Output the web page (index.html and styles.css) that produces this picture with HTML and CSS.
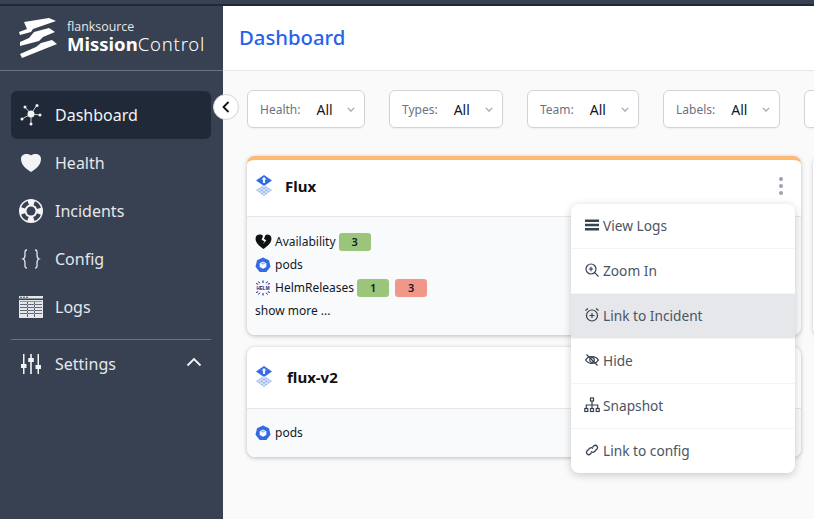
FILE: index.html
```html
<!DOCTYPE html>
<html lang="en">
<head>
  <meta charset="UTF-8" />
  <title>Mission Control</title>
  <link rel="stylesheet" href="styles.css">
</head>
<body>
  <div class="topstrip"></div>
  <div class="app">
    <aside class="sidebar">
      <div class="brand">
        <svg class="brand-logo" viewBox="0 0 38 41" width="38" height="41" fill="#fff">
          <path d="M5 4 30 0 37 3 14 11 12 14 1 17 0 14 8 11Z"/>
          <path d="M15 14 30 10 36 14 24 19 20 23 1 28 1 24 10 20Z"/>
          <path d="M22 25 33 22 38 26 3 40 1 36 17 29Z"/>
        </svg>
        <div class="brand-text">
          <div class="brand-small">flanksource</div>
          <div class="brand-big"><b>Mission</b><span>Control</span></div>
        </div>
      </div>
      <nav class="nav">
        <a class="nav-item active">
          <svg class="nav-icon" viewBox="0 0 24 24" width="24" height="24" fill="#f3f4f6" stroke="#f3f4f6">
            <path stroke-width=".8" d="M12 11 6 4M12 11 18 2M12 11 3 16M12 11 21 12M12 11 12 21"/>
            <circle cx="12" cy="11" r="3.500" stroke="none"/>
            <circle cx="6" cy="4" r="1.500" stroke="none"/><circle cx="18" cy="2.500" r="1.500" stroke="none"/>
            <circle cx="3" cy="16" r="1.500" stroke="none"/><circle cx="21" cy="12" r="1.500" stroke="none"/>
            <circle cx="12" cy="21" r="1.500" stroke="none"/>
          </svg>
          <span>Dashboard</span>
        </a>
        <a class="nav-item">
          <svg class="nav-icon" viewBox="0 0 24 24" width="24" height="24" fill="#f3f4f6">
            <path d="M12 21 C8 18.500 2 14.500 2 8 C2 4.500 4.500 3 7.500 3 C9.500 3 11 3.500 12 4.500 C13 3.500 14.500 3 16.500 3 C19.500 3 22 4.500 22 8 C22 14.500 16 18.500 12 21 Z"/>
          </svg>
          <span>Health</span>
        </a>
        <a class="nav-item">
          <svg class="nav-icon" viewBox="0 0 24 24" width="24" height="24">
            <circle cx="12" cy="12" r="12" fill="#f3f4f6"/>
            <circle cx="12" cy="12" r="4.500" fill="#374151"/>
            <circle cx="12" cy="12" r="8.500" fill="none" stroke="#374151" stroke-width="4" stroke-dasharray="7.350 6" stroke-dashoffset="-3"/>
          </svg>
          <span>Incidents</span>
        </a>
        <a class="nav-item">
          <svg class="nav-icon" viewBox="0 0 24 24" width="24" height="24" fill="none" stroke="#e5e7eb" stroke-width="1.300">
            <path d="M8 3 C5.500 3 6 5 6 8 C6 10.500 5.500 11.500 4 12 C5.500 12.500 6 13.500 6 16 C6 19 5.500 21 8 21"/>
            <path d="M16 3 C18.500 3 18 5 18 8 C18 10.500 18.500 11.500 20 12 C18.500 12.500 18 13.500 18 16 C18 19 18.500 21 16 21"/>
          </svg>
          <span>Config</span>
        </a>
        <a class="nav-item">
          <svg class="nav-icon" viewBox="0 0 24 24" width="24" height="24" fill="#e5e7eb">
            <path d="M0 1H24V3.500H0ZM0 5H24V23H0Z"/>
            <path fill="#374151" d="M1 1.700H3V2.700H1ZM4 1.700H6V2.700H4ZM7 1.700H9V2.700H7ZM1 9H23V9.800H1ZM1 12H23V12.800H1ZM1 15H23V15.800H1ZM1 18H23V18.800H1ZM8 7V22H8.800V7ZM15 7V22H15.800V7ZM1 6.500H23V7H1Z"/>
          </svg>
          <span>Logs</span>
        </a>
        <div class="nav-divider"></div>
        <a class="nav-item settings">
          <svg class="nav-icon" viewBox="0 0 24 24" width="24" height="24" fill="#f3f4f6">
            <path d="M4 2H5.500V12H7.500V16H5.500V22H4V16H2V12H4ZM11.200 2H12.800V6H14.800V10H12.800V22H11.200V10H9.200V6H11.200ZM18.500 2H20V13H22V17H20V22H18.500V17H16.500V13H18.500Z"/>
          </svg>
          <span>Settings</span>
          <svg class="nav-chevron" viewBox="0 0 16 10" width="16" height="10" fill="none" stroke="#f3f4f6" stroke-width="1.800">
            <path d="M1.500 8.500 8 2 14.500 8.500"/>
          </svg>
        </a>
      </nav>
    </aside>
    <button class="collapse">
      <svg viewBox="0 0 10 14" width="10" height="14" fill="none" stroke="#111" stroke-width="1.800"><path d="M7.500 2 2.500 7 7.500 12"/></svg>
    </button>
    <div class="content">
      <header class="header"><h1>Dashboard</h1></header>
      <main class="main">
        <div class="filters">
          <div class="filter filter-health"><span class="filter-label">Health:</span><span class="filter-value">All</span><svg class="caret" viewBox="0 0 10 6" width="8" height="5"><path d="M1 1 5 5 9 1" fill="none" stroke="#9ca3af" stroke-width="1.600"/></svg></div>
          <div class="filter filter-types"><span class="filter-label">Types:</span><span class="filter-value">All</span><svg class="caret" viewBox="0 0 10 6" width="8" height="5"><path d="M1 1 5 5 9 1" fill="none" stroke="#9ca3af" stroke-width="1.600"/></svg></div>
          <div class="filter filter-team"><span class="filter-label">Team:</span><span class="filter-value">All</span><svg class="caret" viewBox="0 0 10 6" width="8" height="5"><path d="M1 1 5 5 9 1" fill="none" stroke="#9ca3af" stroke-width="1.600"/></svg></div>
          <div class="filter filter-labels"><span class="filter-label">Labels:</span><span class="filter-value">All</span><svg class="caret" viewBox="0 0 10 6" width="8" height="5"><path d="M1 1 5 5 9 1" fill="none" stroke="#9ca3af" stroke-width="1.600"/></svg></div>
          <div class="filter filter-more"></div>
        </div>

        <div class="grid">
          <div class="card card-warn">
            <div class="card-head">
              <svg class="flux-icon" viewBox="0 0 18 22" width="18" height="22">
                <path fill="#326ce5" d="M9 0 17 5.500 9 11 1 5.500Z"/>
                <path fill="#fff" d="M8 3H10V8H8Z"/><path fill="#fff" d="M6.500 4.500 9 2 11.500 4.500Z"/>
                <path fill="#9db8ef" d="M9 10 17 15 9 21 1 15Z"/>
                <path stroke="#fff" stroke-width=".6" d="M4 12 13 18M7 10.500 15 16M2.500 14 11 20M14 12 5 18M11 10.500 3 16M15.500 14 7 20"/>
              </svg>
              <span class="card-title">Flux</span>
              <svg class="dots" viewBox="0 0 6 20" width="6" height="20" fill="#9ca3af">
                <circle cx="3" cy="3" r="2"/><circle cx="3" cy="10" r="2"/><circle cx="3" cy="17" r="2"/>
              </svg>
            </div>
            <div class="card-body">
              <div class="check">
                <svg class="check-icon heart" viewBox="0 0 18 16" width="17" height="15">
                  <path fill="#111" d="M9 16 C5 13 .500 9.500 .500 5 C.500 2 2.500 .500 5 .500 C6.500 .500 7.500 1 8.500 2 L7 6 L10 8 L8 11 L12 7 L9.500 5 L11 1.200 C12 .700 12.500 .500 13 .500 C15.500 .500 17.500 2 17.500 5 C17.500 9.500 13 13 9 16Z"/>
                </svg>
                <span>Availability</span>
                <span class="badge green">3</span>
              </div>
              <div class="check">
                <svg class="check-icon" viewBox="0 0 16 16" width="16" height="16">
                  <path fill="#326ce5" d="M8 .500 14 3.300 15.500 9.800 11.300 15 4.700 15 .500 9.800 2 3.300Z"/>
                  <path fill="#fff" d="M8 4.500 11.300 6.200V10L8 11.800 4.700 10V6.200Z"/>
                  <path fill="#9db8ef" d="M5.500 6.500 8 7.800 10.500 6.500 8 5.200Z"/>
                </svg>
                <span>pods</span>
              </div>
              <div class="check">
                <svg class="check-icon" viewBox="0 0 16 16" width="16" height="16" fill="none" stroke="#0f1689">
                  <path stroke-width="1" d="M8 .500V3M3.500 1.500 4.800 3.300M12.500 1.500 11.200 3.300M1.200 3.500 3.200 4.300M14.800 3.500 12.800 4.300"/>
                  <path stroke-width="1" d="M8 15.500V13M3.500 14.500 4.800 12.700M12.500 14.500 11.200 12.700M1.200 12.500 3.200 11.700M14.800 12.500 12.800 11.700"/>
                  <text class="helm-text" x="8" y="10" text-anchor="middle">HELM</text>
                </svg>
                <span>HelmReleases</span>
                <span class="badge green">1</span>
                <span class="badge red">3</span>
              </div>
              <div class="show-more">show more ...</div>
            </div>
          </div>

          <div class="card card-plain">
            <div class="card-head">
              <svg class="flux-icon" viewBox="0 0 18 22" width="18" height="22">
                <path fill="#326ce5" d="M9 0 17 5.500 9 11 1 5.500Z"/>
                <path fill="#fff" d="M8 3H10V8H8Z"/><path fill="#fff" d="M6.500 4.500 9 2 11.500 4.500Z"/>
                <path fill="#9db8ef" d="M9 10 17 15 9 21 1 15Z"/>
                <path stroke="#fff" stroke-width=".6" d="M4 12 13 18M7 10.500 15 16M2.500 14 11 20M14 12 5 18M11 10.500 3 16M15.500 14 7 20"/>
              </svg>
              <span class="card-title">flux-v2</span>
            </div>
            <div class="card-body">
              <div class="check">
                <svg class="check-icon" viewBox="0 0 16 16" width="16" height="16">
                  <path fill="#326ce5" d="M8 .500 14 3.300 15.500 9.800 11.300 15 4.700 15 .500 9.800 2 3.300Z"/>
                  <path fill="#fff" d="M8 4.500 11.300 6.200V10L8 11.800 4.700 10V6.200Z"/>
                  <path fill="#9db8ef" d="M5.500 6.500 8 7.800 10.500 6.500 8 5.200Z"/>
                </svg>
                <span>pods</span>
              </div>
            </div>
          </div>
        </div>
        <div class="card-next"></div>

        <div class="menu">
          <div class="menu-item">
            <svg viewBox="0 0 16 16" width="16" height="16" fill="#374151"><path d="M1 2.500H15V5H1ZM1 6.800H15V9.300H1ZM1 11H15V13.500H1Z"/></svg>
            <span>View Logs</span>
          </div>
          <div class="menu-item">
            <svg viewBox="0 0 16 16" width="16" height="16" fill="none" stroke="#374151" stroke-width="1.200"><circle cx="7" cy="7" r="5"/><path d="M10.700 10.700 14.500 14.500M7 4.800V9.200M4.800 7H9.200"/></svg>
            <span>Zoom In</span>
          </div>
          <div class="menu-item hover">
            <svg viewBox="0 0 16 16" width="16" height="16" fill="none" stroke="#374151" stroke-width="1.200"><circle cx="8" cy="8.500" r="5.500"/><path d="M8 6V11M5.500 8.500H10.500M1.500 3.500 4 1.500M14.500 3.500 12 1.500"/></svg>
            <span>Link to Incident</span>
          </div>
          <div class="menu-item">
            <svg viewBox="0 0 16 16" width="16" height="16" fill="none" stroke="#374151" stroke-width="1.200"><path d="M1.500 8 C4 4 11 3 14.500 8 C12 12 5 13 1.500 8Z"/><circle cx="8" cy="8" r="2.300"/><path d="M2.500 2.500 13.500 13.500"/></svg>
            <span>Hide</span>
          </div>
          <div class="menu-item">
            <svg viewBox="0 0 16 16" width="16" height="16" fill="none" stroke="#374151" stroke-width="1.200"><rect x="6.500" y="1" width="3" height="3"/><rect x=".800" y="11.500" width="3" height="3"/><rect x="6.500" y="11.500" width="3" height="3"/><rect x="12.200" y="11.500" width="3" height="3"/><path d="M8 4V11.500M2.300 11.500V8H13.700V11.500"/></svg>
            <span>Snapshot</span>
          </div>
          <div class="menu-item">
            <svg viewBox="0 0 16 16" width="16" height="16" fill="none" stroke="#374151" stroke-width="1.300"><path d="M7 9.500 C8 10.500 9.500 10.500 10.500 9.500 L13 7 C14.800 5 11.800 2 10 3.800 L8.500 5.300"/><path d="M9 6.500 C8 5.500 6.500 5.500 5.500 6.500 L3 9 C1.200 11 4.200 14 6 12.200 L7.500 10.700"/></svg>
            <span>Link to config</span>
          </div>
        </div>
      </main>
    </div>
  </div>
</body>
</html>
```

FILE: styles.css
```css
* {
  box-sizing: border-box;
}

html, body {
  height: 100%;
}

body {
  margin: 0;
  overflow: hidden;
  font-family: "Noto Sans", "Open Sans", sans-serif;
  font-size: 14px;
  color: #111827;
  background-color: #fafafa;
  display: flex;
  flex-direction: column;
}

.topstrip {
  height: 6px;
  flex: none;
  background-color: #374151;
  border-bottom: 2px solid #1f2937;
}

.app {
  flex: 1;
  display: flex;
  position: relative;
  min-height: 0;
}

/* sidebar */
.sidebar {
  width: 223px;
  flex: none;
  background-color: #374151;
  color: #f3f4f6;
}

.brand {
  height: 65px;
  padding: 11px 0 0 19px;
  display: flex;
  gap: 10px;
  border-bottom: 1px solid #6b7280;
}

.brand-logo {
  margin-top: 1px;
}

.brand-text {
  color: #fff;
  margin-top: 2px;
}

.brand-small {
  font-family: "Open Sans", sans-serif;
  font-size: 12.4px;
  line-height: 15px;
  color: #e5e7eb;
}

.brand-big {
  font-size: 18.5px;
  line-height: 20px;
}

.brand-big b {
  font-weight: 700;
}

.brand-big span {
  font-weight: 300;
  letter-spacing: 0.8px;
}

.nav {
  padding: 20px 12px 0 11px;
}

.nav-item {
  height: 48px;
  padding-left: 8px;
  display: flex;
  align-items: center;
  gap: 12px;
  font-size: 16px;
  color: #e5e7eb;
  border-radius: 6px;
}

.nav-item.active {
  background-color: #1f2937;
  color: #f3f4f6;
}

.nav-icon {
  flex: none;
}

.nav-divider {
  height: 1px;
  margin-top: 8px;
  background-color: #6b7280;
}

.nav-chevron {
  margin-left: auto;
  margin-right: 9px;
  margin-top: -5px;
}

.collapse {
  position: absolute;
  left: 213px;
  top: 88px;
  width: 26px;
  height: 26px;
  padding: 0;
  border: 1px solid #d1d5db;
  border-radius: 50%;
  background-color: #fff;
  display: flex;
  align-items: center;
  justify-content: center;
  z-index: 5;
}

/* main area */
.content {
  flex: 1;
  min-width: 0;
  display: flex;
  flex-direction: column;
}

.header {
  height: 65px;
  flex: none;
  padding: 0 0 2px 16px;
  display: flex;
  align-items: center;
  background-color: #fff;
  border-bottom: 1px solid #e5e7eb;
}

.header h1 {
  margin: 0;
  font-size: 20.3px;
  font-weight: 500;
  color: #2563eb;
}

.main {
  flex: 1;
  position: relative;
  padding: 19px 0 0 24px;
  overflow: hidden;
}

.filters {
  display: flex;
  gap: 24px;
}

.filter {
  height: 38px;
  flex: none;
  padding: 0 9px 0 12px;
  display: flex;
  align-items: center;
  background-color: #fff;
  border: 1px solid #d1d5db;
  border-radius: 6px;
  box-shadow: 0 1px 2px rgba(0, 0, 0, 0.05);
}

.filter-health { width: 118px; }
.filter-types { width: 114px; }
.filter-team { width: 112px; }
.filter-labels { width: 117px; }
.filter-more { width: 60px; }

.filter-label {
  font-size: 12px;
  color: #6b7280;
  margin-right: 16px;
}

.filter-value {
  font-size: 14px;
  color: #111827;
}

.caret {
  margin: 1px 0 0 auto;
}

.grid {
  width: 554px;
  margin-top: 28px;
  display: flex;
  flex-direction: column;
  gap: 12px;
}

.card {
  background-color: #fff;
  border-radius: 8px;
  overflow: hidden;
  box-shadow: 0 1px 4px rgba(0, 0, 0, 0.25);
}

.card-warn {
  border-top: 4px solid #fdba74;
}

.card-head {
  height: 57px;
  padding: 0 17px 4px 8px;
  display: flex;
  align-items: center;
  border-bottom: 1px solid #e5e7eb;
}

.card-plain .card-head {
  height: 62px;
  padding-bottom: 1px;
}

.flux-icon {
  flex: none;
  margin-right: 12px;
}

.card-plain .flux-icon {
  margin-right: 14px;
}

.card-title {
  font-size: 15px;
  font-weight: 700;
  color: #111;
}

.dots {
  margin-left: auto;
}

.card-body {
  padding: 13px 8px 13px;
  background-color: #f9fafb;
  font-size: 12px;
  line-height: 23px;
}

.card-plain .card-body {
  padding: 12px 8px 13px;
}

.check {
  height: 23px;
  display: flex;
  align-items: center;
}

.check-icon {
  flex: none;
  margin-right: 4px;
}

.check-icon.heart {
  margin-right: 3px;
}

.helm-text {
  font-family: "Liberation Sans", sans-serif;
  font-size: 4.6px;
  font-weight: 700;
  fill: #0f1689;
  stroke: none;
}

.badge {
  width: 32px;
  height: 18px;
  margin-left: 3px;
  border-radius: 3px;
  font-size: 11px;
  font-weight: 600;
  line-height: 18px;
  text-align: center;
}

.badge + .badge {
  margin-left: 6px;
}

.badge.green {
  background-color: #9bc57a;
}

.badge.red {
  background-color: #f0978a;
}

.card-next {
  position: absolute;
  left: 590px;
  top: 85px;
  width: 20px;
  height: 180px;
  background-color: #fff;
  border-radius: 8px;
  box-shadow: 0 1px 4px rgba(0, 0, 0, 0.2);
}

/* dropdown */
.menu {
  position: absolute;
  left: 348px;
  top: 133px;
  width: 224px;
  background-color: #fff;
  border-radius: 8px;
  box-shadow: 0 2px 8px rgba(0, 0, 0, 0.2);
  overflow: hidden;
  z-index: 4;
}

.menu-item {
  height: 45px;
  padding: 0 0 2px 13px;
  display: flex;
  align-items: center;
  gap: 3px;
  font-size: 13.7px;
  color: #4b5563;
  border-bottom: 1px solid #f3f4f6;
}

.menu-item:last-child {
  height: 44px;
  border-bottom: none;
}

.menu-item.hover {
  background-color: #e5e7eb;
}

.menu-item svg {
  flex: none;
}
```
